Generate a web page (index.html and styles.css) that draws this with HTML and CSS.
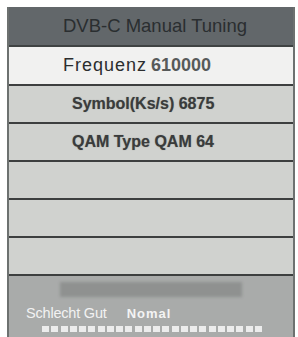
FILE: index.html
```html
<!DOCTYPE html>
<html lang="de">
<head>
    <meta charset="UTF-8">
    <meta name="viewport" content="width=device-width, initial-scale=1.0">
    <title>DVB-C Manual Tuning</title>
    <link rel="stylesheet" href="styles.css">
</head>
<body>
    <div class="panel">
        <div class="header">DVB-C Manual Tuning</div>
        <div class="row row-active">
            <span class="label">Frequenz</span> <span class="value">610000</span>
        </div>
        <div class="row row-bold">Symbol(Ks/s) 6875</div>
        <div class="row row-bold">QAM Type QAM 64</div>
        <div class="row"></div>
        <div class="row"></div>
        <div class="row"></div>

        <!-- Signal-Anzeige -->
        <div class="signal">
            <div class="signal-bar"></div>
            <div class="signal-text">
                <span class="quality">Schlecht Gut</span>
                <span class="status">Nomal</span>
            </div>
            <div class="dots">
                <span></span><span></span><span></span><span></span>
                <span></span><span></span><span></span><span></span>
                <span></span><span></span><span></span><span></span>
                <span></span><span></span><span></span><span></span>
                <span></span><span></span><span></span><span></span>
                <span></span><span></span><span></span><span></span>
            </div>
        </div>
    </div>
</body>
</html>
```

FILE: styles.css
```css
body {
    margin: 0;
    padding: 7px 0 0 7px;
    background-color: #ffffff;
    font-family: "Liberation Sans", Arial, sans-serif;
}
.panel {
    width: 284px;
    height: 330px;
    border-left: 2px solid #6d7170;
    border-right: 2px solid #6d7170;
    background-color: #a9abaa;
    display: flex;
    flex-direction: column;
    overflow: hidden;
}
.header {
    height: 38px;
    background-color: #62676a;
    border-bottom: 2px solid #3f4343;
    color: #2a2e30;
    font-size: 18.5px;
    display: flex;
    align-items: center;
    justify-content: center;
    padding-left: 8px;
}
.row {
    height: 36px;
    flex-shrink: 0;
    background-color: #d0d2cf;
    border-bottom: 2px solid #3d3f3f;
    display: flex;
    align-items: center;
    color: #333535;
}
.row-active {
    height: 37px;
    background-color: #f1f1f0;
    padding-left: 54px;
    font-size: 18px;
}
.row-active .label {
    letter-spacing: 1px;
    color: #2b2d2e;
    margin-right: 4px;
}
.row-active .value {
    font-weight: bold;
    color: #575a5a;
}
.row-bold {
    padding-left: 63px;
    font-weight: bold;
    font-size: 16px;
    color: #3a3c3c;
    text-shadow: 0 0 1px rgba(60, 60, 60, 0.5);
}
.signal {
    flex: 1;
    padding-top: 6px;
}
.signal-bar {
    width: 182px;
    height: 15px;
    margin-left: 51px;
    background-color: #8f9190;
    filter: blur(1.5px);
}
.signal-text {
    margin-top: 8px;
    margin-left: 17px;
    font-size: 14.5px;
    color: #f2f2f2;
    display: flex;
    align-items: baseline;
}
.quality {
    letter-spacing: -0.2px;
}
.status {
    margin-left: 20px;
    font-weight: bold;
    font-size: 13px;
    letter-spacing: 1px;
    color: #f4f4f4;
}
.dots {
    margin-top: 5px;
    margin-left: 33px;
    display: flex;
    gap: 2.25px;
}
.dots span {
    width: 7px;
    height: 6px;
    background-color: #ececec;
    filter: blur(0.5px);
}
```
